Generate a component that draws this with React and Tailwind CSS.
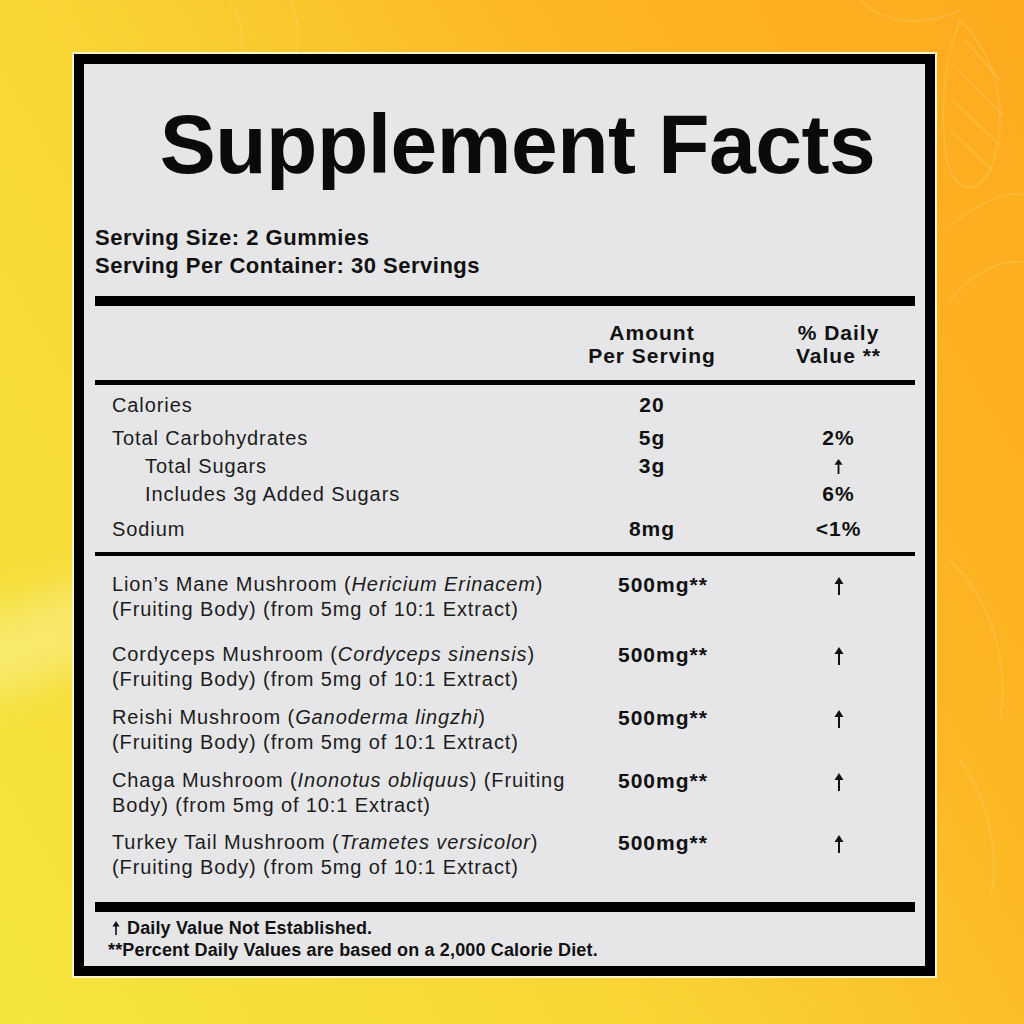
const Arrow = ({ h = 18, w = 10 }) => (
  <svg width={w} height={h} viewBox="0 0 10 18" className="inline-block" preserveAspectRatio="none">
    <polygon points="5,0 9.5,7 0.5,7" fill="#111" />
    <rect x="4" y="6" width="2" height="12" fill="#111" />
  </svg>
);

const nutrients = [
  { name: "Calories", amount: "20", dv: "", indent: false, mt: "mt-0" },
  { name: "Total Carbohydrates", amount: "5g", dv: "2%", indent: false, mt: "mt-[5px]" },
  { name: "Total Sugars", amount: "3g", dv: "arrow", indent: true, mt: "mt-0" },
  { name: "Includes 3g Added Sugars", amount: "", dv: "6%", indent: true, mt: "mt-0" },
  { name: "Sodium", amount: "8mg", dv: "<1%", indent: false, mt: "mt-[7px]" },
];

const mushrooms = [
  { a: "Lion\u2019s Mane Mushroom (", i: "Hericium Erinacem", b: ")", l2: "(Fruiting Body) (from 5mg of 10:1 Extract)", mt: "mt-[16px]" },
  { a: "Cordyceps Mushroom (", i: "Cordyceps sinensis", b: ")", l2: "(Fruiting Body) (from 5mg of 10:1 Extract)", mt: "mt-[20px]" },
  { a: "Reishi Mushroom (", i: "Ganoderma lingzhi", b: ")", l2: "(Fruiting Body) (from 5mg of 10:1 Extract)", mt: "mt-[13px]" },
  { a: "Chaga Mushroom (", i: "Inonotus obliquus", b: ") (Fruiting", l2: "Body) (from 5mg of 10:1 Extract)", mt: "mt-[13px]" },
  { a: "Turkey Tail Mushroom (", i: "Trametes versicolor", b: ")", l2: "(Fruiting Body) (from 5mg of 10:1 Extract)", mt: "mt-[12px]" },
];

export default function App() {
  return (
    <div className="relative w-[1024px] h-[1024px] overflow-hidden bg-[linear-gradient(60deg,#f4e53c_0%,#f8d534_40%,#fcb624_70%,#fdaa1e_100%)] pt-[52px] pl-[72px] font-['Liberation_Sans',Arial,sans-serif]">
      {/* faint line art and glow in the background */}
      <div className="absolute left-[-60px] top-[600px] h-[80px] w-[200px] rotate-[-20deg] rounded-full bg-[rgba(255,250,200,0.35)] blur-[20px]" />
      <svg className="absolute inset-0" width="1024" height="1024" fill="none" stroke="rgba(255,235,180,0.16)" strokeWidth="2">
        <path d="M960 20 C1000 60 1010 120 990 170 C975 200 950 190 945 150 C940 100 945 60 960 20 Z" />
        <path d="M965 40 L1000 80 M958 70 L1003 115 M952 100 L1000 145 M950 130 L992 170" />
        <path d="M945 230 C980 200 1010 190 1024 195 M950 300 C975 270 1000 260 1024 262" />
        <path d="M860 0 C880 20 920 30 960 10" />
        <path d="M230 0 C240 20 245 40 240 55 M290 0 C300 25 300 45 295 55" />
        <path d="M950 560 C990 600 1010 660 1000 720 M960 760 C990 800 1000 860 990 900" />
      </svg>

      <div className="relative w-[865px] border-2 border-[#fbf3c8]">
        <div className="border-[10px] border-black bg-[#e6e6e8] pl-[11px] pr-[10px] pt-[38px] pb-[5px] text-[#1c1c1c]">
          <h1 className="pl-[25px] text-center text-[84px] font-bold leading-none tracking-[-0.5px] text-[#0a0a0a]">
            Supplement Facts
          </h1>

          <div className="mt-[38px] text-[22px] font-bold leading-[28px] tracking-[0.5px] text-[#111]">
            <p>Serving Size: 2 Gummies</p>
            <p>Serving Per Container: 30 Servings</p>
          </div>

          <div className="mt-[16px] h-[10px] bg-black" />

          <div className="flex pt-[15px] text-[21px] font-bold leading-[23px] tracking-[1px] text-[#111]">
            <div className="w-[467px]" />
            <div className="w-[180px] text-center">
              Amount
              <br />
              Per Serving
            </div>
            <div className="flex-1 pl-[20px] text-center">
              % Daily
              <br />
              Value **
            </div>
          </div>

          <div className="mt-[13px] h-[5px] bg-black" />

          <div className="pt-[6px]">
            {nutrients.map((n) => (
              <div key={n.name} className={`flex h-[28px] items-center ${n.mt}`}>
                <div className={`w-[467px] text-[20px] tracking-[0.9px] ${n.indent ? "pl-[50px]" : "pl-[17px]"}`}>
                  {n.name}
                </div>
                <div className="w-[180px] text-center text-[21px] font-bold tracking-[1px] text-[#111]">
                  {n.amount}
                </div>
                <div className="flex flex-1 justify-center pl-[20px] text-[21px] font-bold tracking-[1px] text-[#111]">
                  {n.dv === "arrow" ? <Arrow h={15} w={9} /> : n.dv}
                </div>
              </div>
            ))}
          </div>

          <div className="mt-[9px] h-[4px] bg-black" />

          <div>
            {mushrooms.map((m) => (
              <div key={m.i} className={`flex ${m.mt}`}>
                <div className="w-[467px] whitespace-nowrap pl-[17px] text-[20px] leading-[25px] tracking-[0.9px]">
                  {m.a}
                  <em className="italic">{m.i}</em>
                  {m.b}
                  <br />
                  {m.l2}
                </div>
                <div className="w-[180px] pl-[56px] text-[21px] font-bold leading-[25px] tracking-[1px] text-[#111]">
                  500mg**
                </div>
                <div className="flex flex-1 justify-center pl-[20px] pt-[5px]">
                  <Arrow h={18} w={10} />
                </div>
              </div>
            ))}
          </div>

          <div className="mt-[22px] h-[10px] bg-black" />

          <div className="pt-[5px] text-[18px] font-bold leading-[22px] tracking-[0.15px] text-[#111]">
            <p className="flex items-center gap-[7px] pl-[17px]">
              <Arrow h={14} w={8} />
              <span>Daily Value Not Established.</span>
            </p>
            <p className="pl-[13px]">**Percent Daily Values are based on a 2,000 Calorie Diet.</p>
          </div>
        </div>
      </div>
    </div>
  );
}
